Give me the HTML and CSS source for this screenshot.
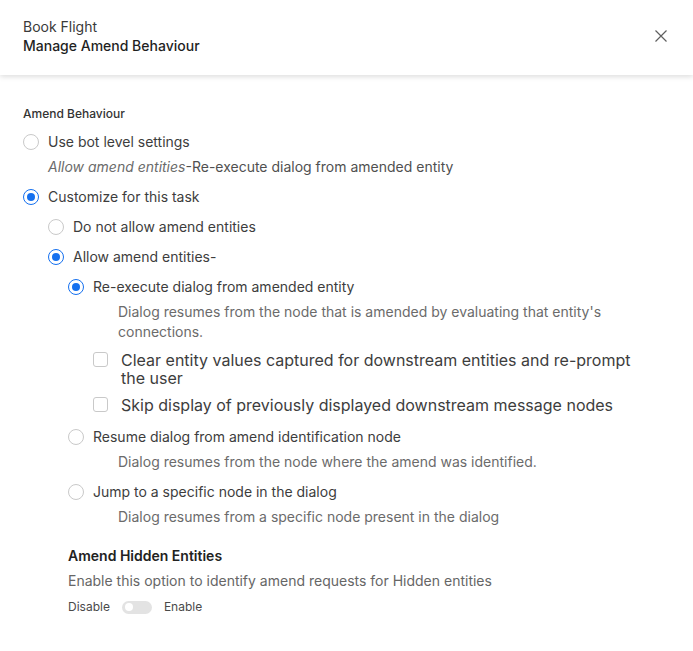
FILE: index.html
```html
<!DOCTYPE html>
<html lang="en">
<head>
    <meta charset="UTF-8">
    <meta name="viewport" content="width=device-width, initial-scale=1.0">
    <title>Manage Amend Behaviour</title>
    <link rel="stylesheet" href="styles.css">
</head>
<body>
    <div class="panel">
        <div class="panel-header">
            <div class="titles">
                <div class="crumb">Book Flight</div>
                <div class="title">Manage Amend Behaviour</div>
            </div>
            <button class="close-btn" aria-label="Close">
                <svg width="12" height="12" viewBox="0 0 12 12">
                    <path d="M0.5 0.5 L11.5 11.5 M11.5 0.5 L0.5 11.5" stroke="#5f5f5f" stroke-width="1.2" fill="none"/>
                </svg>
            </button>
        </div>

        <div class="panel-body">
            <div class="section-label">Amend Behaviour</div>

            <div class="option">
                <span class="radio"></span>
                <span>Use bot level settings</span>
            </div>
            <div class="desc desc-first"><em>Allow amend entities</em>-Re-execute dialog from amended entity</div>

            <div class="option">
                <span class="radio checked"></span>
                <span>Customize for this task</span>
            </div>

            <div class="group">
                <div class="option">
                    <span class="radio"></span>
                    <span>Do not allow amend entities</span>
                </div>
                <div class="option">
                    <span class="radio checked"></span>
                    <span>Allow amend entities-</span>
                </div>

                <div class="group group-inner">
                    <div class="option">
                        <span class="radio checked"></span>
                        <span>Re-execute dialog from amended entity</span>
                    </div>
                    <div class="desc">Dialog resumes from the node that is amended by evaluating that entity's connections.</div>

                    <div class="check-list">
                        <label class="check">
                            <span class="box"></span>
                            <span>Clear entity values captured for downstream entities and re-prompt the user</span>
                        </label>
                        <label class="check">
                            <span class="box"></span>
                            <span>Skip display of previously displayed downstream message nodes</span>
                        </label>
                    </div>

                    <div class="option">
                        <span class="radio"></span>
                        <span>Resume dialog from amend identification node</span>
                    </div>
                    <div class="desc">Dialog resumes from the node where the amend was identified.</div>

                    <div class="option">
                        <span class="radio"></span>
                        <span>Jump to a specific node in the dialog</span>
                    </div>
                    <div class="desc">Dialog resumes from a specific node present in the dialog</div>

                    <div class="hidden-block">
                        <div class="hidden-title">Amend Hidden Entities</div>
                        <div class="hidden-text">Enable this option to identify amend requests for Hidden entities</div>
                        <div class="toggle-row">
                            <span>Disable</span>
                            <span class="toggle"><span class="knob"></span></span>
                            <span>Enable</span>
                        </div>
                    </div>
                </div>
            </div>
        </div>
    </div>
</body>
</html>
```

FILE: styles.css
```css
body {
    margin: 0;
    font-family: Inter, "Noto Sans", sans-serif;
    background-color: #fff;
    color: #3d3d3d;
}
.panel {
    width: 693px;
    min-height: 651px;
    background-color: #fff;
}
.panel-header {
    height: 75px;
    box-sizing: border-box;
    padding: 17px 23px 0 23px;
    display: flex;
    justify-content: space-between;
    align-items: flex-start;
    box-shadow: 0 2px 5px rgba(0,0,0,0.13);
}
.crumb {
    font-size: 14px;
    line-height: 19px;
    color: #3a3a3a;
}
.title {
    font-size: 14px;
    line-height: 19px;
    font-weight: 500;
    color: #1f1f1f;
}
.close-btn {
    border: none;
    background: none;
    padding: 0;
    margin: 13px 3px 0 0;
    width: 12px;
    height: 12px;
    cursor: pointer;
}
.panel-body {
    padding: 31px 23px 30px 23px;
    width: 625px;
}
.section-label {
    font-size: 12px;
    line-height: 16px;
    font-weight: 500;
    color: #333;
    margin-bottom: 10px;
}
.option {
    display: flex;
    align-items: center;
    gap: 9px;
    font-size: 14px;
    line-height: 20px;
    margin-bottom: 10px;
    color: #3d3d3d;
}
.radio {
    width: 16px;
    height: 16px;
    box-sizing: border-box;
    border: 1px solid #c9c9c9;
    border-radius: 50%;
    flex-shrink: 0;
    display: flex;
    align-items: center;
    justify-content: center;
}
.radio.checked {
    border: 1.5px solid #1570ef;
}
.radio.checked::after {
    content: "";
    width: 8px;
    height: 8px;
    border-radius: 50%;
    background-color: #1570ef;
}
.group {
    padding-left: 25px;
}
.group-inner {
    padding-left: 20px;
}
.desc {
    font-size: 14px;
    line-height: 20px;
    color: #6b6b6b;
    margin: -5px 0 10px 25px;
    padding-left: 25px;
}
.desc-first {
    padding-left: 0;
    color: #505050;
}
.desc em {
    color: #6b6b6b;
}
.check-list {
    padding-left: 25px;
    margin-top: -1px;
    margin-bottom: 13px;
    display: flex;
    flex-direction: column;
    gap: 9px;
}
.check {
    display: flex;
    align-items: flex-start;
    gap: 13px;
    font-size: 16px;
    line-height: 18px;
    color: #3d3d3d;
}
.box {
    width: 15px;
    height: 15px;
    box-sizing: border-box;
    border: 1px solid #c9c9c9;
    border-radius: 3px;
    flex-shrink: 0;
    margin-top: 1px;
}
.hidden-block {
    margin-top: 19px;
}
.hidden-title {
    font-size: 14px;
    line-height: 20px;
    font-weight: 600;
    color: #222;
}
.hidden-text {
    font-size: 14px;
    line-height: 20px;
    color: #666;
    margin-top: 5px;
}
.toggle-row {
    display: flex;
    align-items: center;
    gap: 12px;
    font-size: 12px;
    line-height: 16px;
    color: #4a4a4a;
    margin-top: 8px;
}
.toggle {
    width: 30px;
    height: 13px;
    border-radius: 7px;
    background-color: #e3e3e3;
    display: flex;
    align-items: center;
    padding-left: 3px;
    box-sizing: border-box;
}
.knob {
    width: 8px;
    height: 8px;
    border-radius: 50%;
    background-color: #fff;
}
```
